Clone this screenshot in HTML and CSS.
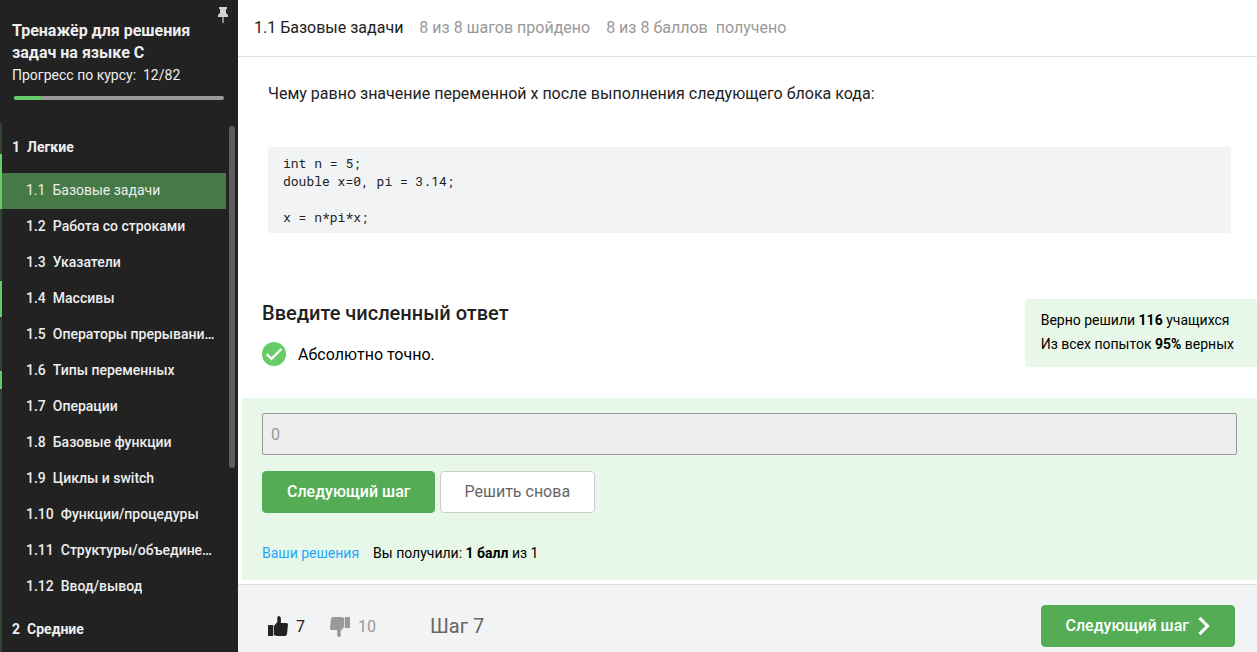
FILE: index.html
```html
<!DOCTYPE html>
<html lang="ru">
<head>
<meta charset="utf-8">
<meta name="viewport" content="width=device-width, initial-scale=1">
<title>1.1 Базовые задачи</title>
<link rel="stylesheet" href="styles.css">
</head>
<body>
<div class="app">
  <aside class="sidebar">
    <header class="course">
      <button class="pin" type="button" aria-label="Закрепить панель">
        <svg width="10" height="16" viewBox="0 0 10 16"><path fill="#d3d3d3" d="M1 0h8v2H8v4l2 2v2H0V8l2-2V2H1z"/><path fill="#8a8a8a" d="M4 10h2v6H4z"/></svg>
      </button>
      <h1 class="course-title">Тренажёр для решения задач на языке С</h1>
      <p class="course-progress">Прогресс по курсу:&nbsp; 12/82</p>
      <div class="bar"><div class="bar-fill"></div></div>
    </header>
    <div class="toc">
      <div class="track">
        <span class="gap-first"></span><span class="done done-tall"></span>
        <span class="gap-second"></span><span class="done done-mid"></span>
        <span class="gap-third"></span><span class="done done-short"></span>
      </div>
      <nav class="lessons">
        <h2 class="section"><span>1</span><span>Легкие</span></h2>
        <a class="lesson active" href="#"><span>1.1</span><span class="name">Базовые задачи</span></a>
        <a class="lesson" href="#"><span>1.2</span><span class="name">Работа со строками</span></a>
        <a class="lesson" href="#"><span>1.3</span><span class="name">Указатели</span></a>
        <a class="lesson" href="#"><span>1.4</span><span class="name">Массивы</span></a>
        <a class="lesson" href="#"><span>1.5</span><span class="name">Операторы прерывани…</span></a>
        <a class="lesson" href="#"><span>1.6</span><span class="name">Типы переменных</span></a>
        <a class="lesson" href="#"><span>1.7</span><span class="name">Операции</span></a>
        <a class="lesson" href="#"><span>1.8</span><span class="name">Базовые функции</span></a>
        <a class="lesson" href="#"><span>1.9</span><span class="name">Циклы и switch</span></a>
        <a class="lesson" href="#"><span>1.10</span><span class="name">Функции/процедуры</span></a>
        <a class="lesson" href="#"><span>1.11</span><span class="name">Структуры/объедине…</span></a>
        <a class="lesson" href="#"><span>1.12</span><span class="name">Ввод/вывод</span></a>
        <h2 class="section"><span>2</span><span>Средние</span></h2>
      </nav>
      <div class="scroll"><div class="thumb"></div></div>
    </div>
  </aside>
  <main class="main">
    <header class="topbar">
      <span class="topbar-title">1.1 Базовые задачи</span>
      <span>8 из 8 шагов пройдено</span>
      <span>8 из 8 баллов&nbsp; получено</span>
    </header>
    <section class="task">
      <p class="question">Чему равно значение переменной x после выполнения следующего блока кода:</p>
      <pre class="code"><code>int n = 5;
double x=0, pi = 3.14;

x = n*pi*x;</code></pre>
    </section>
    <section class="status">
      <div class="verdict">
        <h2 class="prompt"><label for="answer">Введите численный ответ</label></h2>
        <div class="result">
          <svg width="24" height="24" viewBox="0 0 24 24"><circle cx="12" cy="12" r="12" fill="#66cc66"/><path d="M4.800 12.200l4.700 4.700L19.400 7" fill="none" stroke="#fff" stroke-width="2.400"/></svg>
          <p class="result-text">Абсолютно точно.</p>
        </div>
      </div>
      <div class="stats">
        <p>Верно решили <b>116</b> учащихся</p>
        <p>Из всех попыток <b>95%</b> верных</p>
      </div>
    </section>
    <section class="attempt">
      <input class="answer" id="answer" type="text" value="0" disabled>
      <div class="actions">
        <button class="btn btn-primary" type="button">Следующий шаг</button>
        <button class="btn btn-plain" type="button">Решить снова</button>
      </div>
      <p class="score"><a href="#">Ваши решения</a><span>Вы получили: <b>1 балл</b> из 1</span></p>
    </section>
    <footer class="footer">
      <button class="vote" type="button" aria-label="Нравится: 7">
        <svg width="20" height="20" viewBox="0 0 20 20"><path d="M.8 9h3.700q.8 0 .8.8v9.400q0 .8-.8.8H.8q-.8 0-.8-.8V9.800q0-.8.800-.8zM6 10 9.300 6V1.500Q9.300 0 10.800 0q2.100 0 2.100 2.600V7h5.600q1.500 0 1.500 1.500l-1 9.500q-.2 2-2 2H9.500q-2 0-3.500-1z"/></svg>
        <span class="count">7</span>
      </button>
      <button class="vote vote-down" type="button" aria-label="Не нравится: 10">
        <svg width="20" height="20" viewBox="0 0 20 20"><path transform="rotate(180 10 10)" d="M.8 9h3.700q.8 0 .8.8v9.400q0 .8-.8.8H.8q-.8 0-.8-.8V9.800q0-.8.800-.8zM6 10 9.300 6V1.500Q9.300 0 10.800 0q2.100 0 2.100 2.600V7h5.600q1.500 0 1.500 1.500l-1 9.500q-.2 2-2 2H9.500q-2 0-3.500-1z"/></svg>
        <span class="count">10</span>
      </button>
      <span class="step">Шаг 7</span>
      <button class="btn btn-primary next" type="button">Следующий шаг
        <svg width="12" height="20" viewBox="0 0 12 20"><path d="M1.500 1.800 9.500 10l-8 8.200" fill="none" stroke="#fff" stroke-width="3.200"/></svg>
      </button>
    </footer>
  </main>
</div>
</body>
</html>
```
FILE: styles.css
```css
* { box-sizing: border-box; }
body {
  margin: 0;
  font: 16px/24px Roboto, "Open Sans", sans-serif;
  color: #222;
  background: #fff;
}
h1, h2, p, pre { margin: 0; }
button, input { font: inherit; }
a { text-decoration: none; }
svg { display: block; flex: none; }

.app { display: flex; height: 100vh; overflow: hidden; }

.sidebar {
  display: flex;
  flex-direction: column;
  flex: none;
  width: 238px;
  background: #222;
  color: #eee;
}
.course { position: relative; padding: 20px 14px 0 12px; }
.pin {
  position: absolute;
  top: 7px;
  right: 10px;
  padding: 0;
  border: 0;
  background: none;
}
.course-title { font-size: 16px; line-height: 22px; font-weight: 700; }
.course-progress { font-size: 14px; line-height: 22px; }
.bar {
  height: 4px;
  margin: 10px 0 0 2px;
  border-radius: 2px;
  background: #999;
  overflow: hidden;
}
.bar-fill { width: 13%; height: 100%; background: #66cc66; }

.toc { display: flex; flex: 1; min-height: 0; margin-top: 23px; overflow: hidden; }
.track { display: flex; flex-direction: column; width: 2px; background: #304530; }
.done { background: #66cc66; }
.gap-first { height: 31px; }
.done-tall { height: 55px; }
.gap-second { height: 72px; }
.done-mid { height: 36px; }
.gap-third { height: 54px; }
.done-short { height: 18px; }
.lessons { flex: 1; min-width: 0; font-size: 14px; }
.section {
  display: flex;
  gap: 7px;
  padding-left: 10px;
  font-size: 14px;
  line-height: 48px;
  font-weight: 700;
}
.section:first-child { padding-bottom: 2px; }
.lesson {
  display: flex;
  gap: 7px;
  padding: 0 10px 2px 24px;
  line-height: 34px;
  font-weight: 500;
  color: #eee;
}
.lesson .name { overflow: hidden; white-space: nowrap; text-overflow: ellipsis; }
.active { background: #457945; font-weight: 400; }
.scroll { width: 12px; padding: 3px 3px 0; }
.thumb { height: 342px; border-radius: 3px; background: #5e5e5e; }

.main { display: flex; flex-direction: column; flex: 1; min-width: 0; }
.topbar {
  display: flex;
  gap: 16px;
  padding: 16px;
  border-bottom: 1px solid #ddd;
  color: #999;
}
.topbar-title { color: #222; }

.task { padding: 25px 26px 0 30px; }
.code {
  margin-top: 41px;
  padding: 7px 15px;
  background: #f2f3f5;
  font: 13px/18px "Roboto Mono", "Liberation Mono", monospace;
}
.code code { font: inherit; }

.status {
  display: flex;
  justify-content: space-between;
  align-items: flex-start;
  margin-top: 66px;
  padding-left: 24px;
}
.prompt { font-size: 20px; line-height: 28px; font-weight: 500; }
.result {
  display: flex;
  gap: 12px;
  margin-top: 15px;
  color: #000;
}
.result-text { line-height: 26px; }
.stats {
  padding: 9px 23px 11px 16px;
  border-radius: 4px;
  background: #e7f8e8;
  color: #000;
  font-size: 14px;
}

.attempt {
  margin: 30px 0 4px 4px;
  padding: 15px 20px;
  background: #e7f8e8;
}
.answer {
  display: block;
  width: 100%;
  height: 42px;
  padding: 0 8px;
  border: 1px solid #999;
  border-radius: 2px;
  background: #eee;
  color: #999;
}
.actions { display: flex; gap: 5px; margin-top: 16px; }
.btn {
  height: 42px;
  padding: 0 24px;
  border: 1px solid #ccc;
  border-radius: 4px;
  background: #fff;
  color: #666;
}
.btn-primary {
  padding: 0 23px 0 24px;
  border-color: #54ad54;
  background: #54ad54;
  color: #fff;
  font-weight: 500;
}
.score {
  display: flex;
  gap: 14px;
  margin-top: 28px;
  color: #000;
  font-size: 14px;
}
.score a { color: #1fa5ff; }

.footer {
  display: flex;
  flex: 1;
  align-items: flex-start;
  padding: 20px 22px 0 30px;
  border-top: 1px solid #ddd;
  background: #f2f3f5;
}
.vote {
  display: flex;
  align-items: center;
  gap: 8px;
  height: 42px;
  margin-right: 25px;
  padding: 0;
  border: 0;
  background: none;
  color: #222;
  fill: #222;
}
.count { padding-top: 2px; }
.vote-down { color: #999; fill: #999; }
.vote-down svg { margin-top: 2px; }
.step { margin-left: 29px; font-size: 20px; line-height: 42px; color: #666; }
.next { display: flex; align-items: center; gap: 9px; margin-left: auto; padding-right: 24px; }
```
